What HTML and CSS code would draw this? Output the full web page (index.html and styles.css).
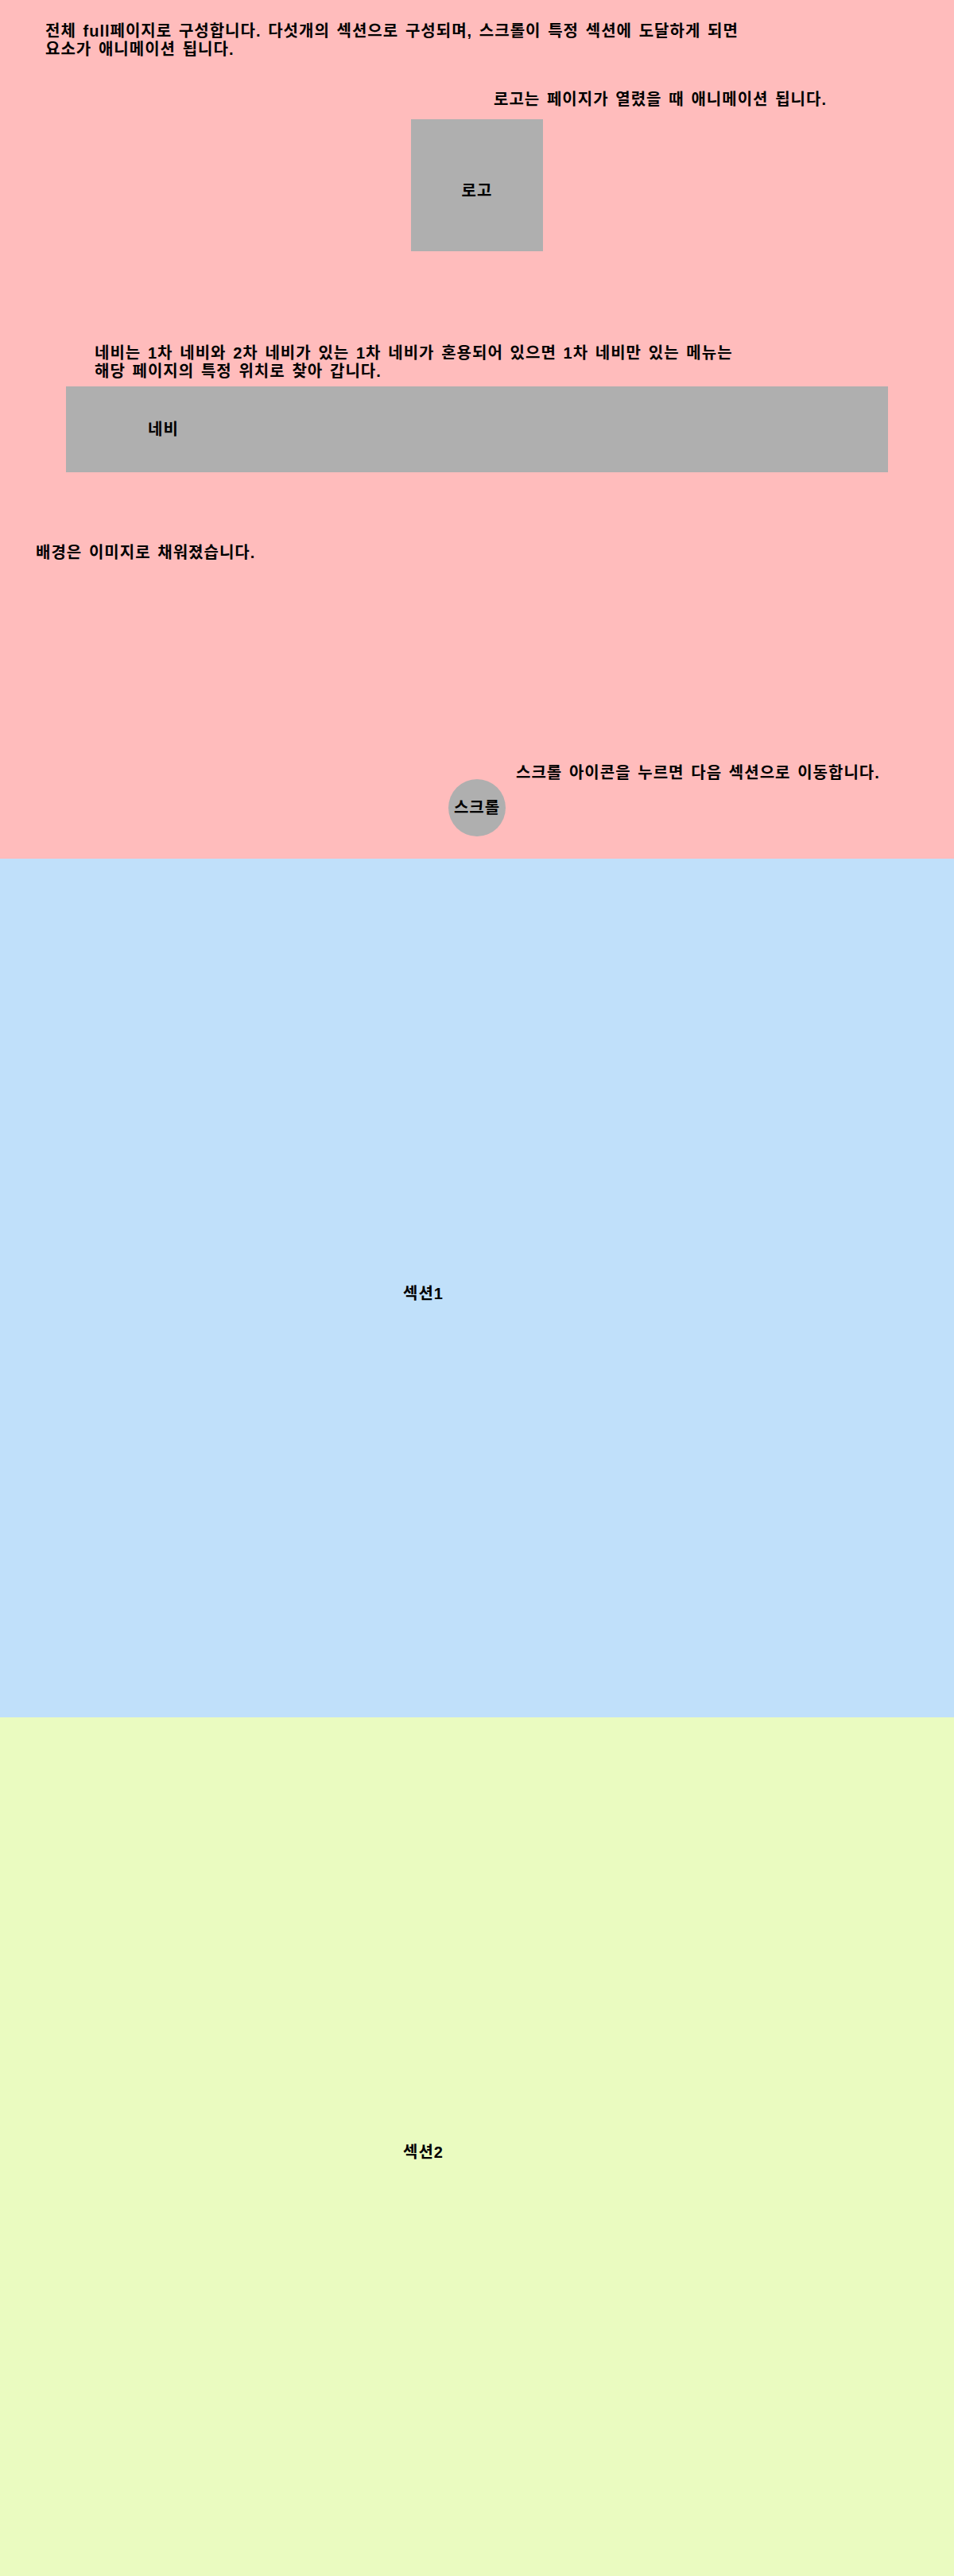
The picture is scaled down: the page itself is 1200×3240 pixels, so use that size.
FILE: index.html
```html
<!DOCTYPE html>
<html lang="ko">
<head>
<meta charset="utf-8">
<title>full page</title>
<link rel="stylesheet" href="styles.css">
</head>
<body>
<main class="page">
  <section class="intro">
    <p class="note note-full">전체 full페이지로 구성합니다. 다섯개의 섹션으로 구성되며, 스크롤이 특정 섹션에 도달하게 되면<br>요소가 애니메이션 됩니다.</p>
    <p class="note note-logo">로고는 페이지가 열렸을 때 애니메이션 됩니다.</p>
    <div class="logo">로고</div>
    <p class="note note-nav">네비는 1차 네비와 2차 네비가 있는 1차 네비가 혼용되어 있으면 1차 네비만 있는 메뉴는<br>해당 페이지의 특정 위치로 찾아 갑니다.</p>
    <nav class="nav">네비</nav>
    <p class="note note-bg">배경은 이미지로 채워졌습니다.</p>
    <p class="note note-scroll">스크롤 아이콘을 누르면 다음 섹션으로 이동합니다.</p>
    <div class="scroll">스크롤</div>
  </section>
  <section class="panel panel-1"><h2 class="panel-title">섹션1</h2></section>
  <section class="panel panel-2"><h2 class="panel-title">섹션2</h2></section>
</main>
</body>
</html>
```
FILE: styles.css
```css
* { box-sizing: border-box; }
html, body { margin: 0; padding: 0; }
body {
  font-family: "Liberation Sans", "Noto Sans CJK KR", sans-serif;
  font-weight: bold;
  font-size: 20px;
  line-height: 23px;
  letter-spacing: 1px;
  word-spacing: 2.2px;
  color: #000;
}
.page { display: flex; flex-direction: column; }
.intro {
  height: 1080px;
  background: #ffbcbc;
  display: flex;
  flex-direction: column;
  align-items: flex-start;
}
.note { margin: 0; white-space: nowrap; }
.note-full { margin: 28px 0 0 57px; }
.note-logo { margin: 40px 0 0 621px; }
.logo {
  align-self: center;
  width: 166px;
  height: 166px;
  margin-top: 13px;
  padding-top: 15px;
  background: #afafaf;
  display: flex;
  align-items: center;
  justify-content: center;
}
.note-nav { margin: 117px 0 0 119px; }
.nav {
  align-self: stretch;
  margin: 7px 83px 0 83px;
  height: 108px;
  background: #afafaf;
  display: flex;
  align-items: center;
  padding-left: 103px;
}
.note-bg { margin: 90px 0 0 45px; }
.note-scroll { margin: 254px 0 0 649px; }
.scroll {
  align-self: center;
  width: 72px;
  height: 72px;
  margin-top: -4px;
  border-radius: 50%;
  background: #afafaf;
  display: flex;
  align-items: center;
  justify-content: center;
  white-space: nowrap;
}
.panel {
  height: 1080px;
  display: flex;
  flex-direction: column;
}
.panel-1 { background: #c0e0fa; }
.panel-2 { background: #eafbc0; }
.panel-title {
  margin: 536px 0 0 507px;
  font-size: 20px;
  line-height: 23px;
}
```
